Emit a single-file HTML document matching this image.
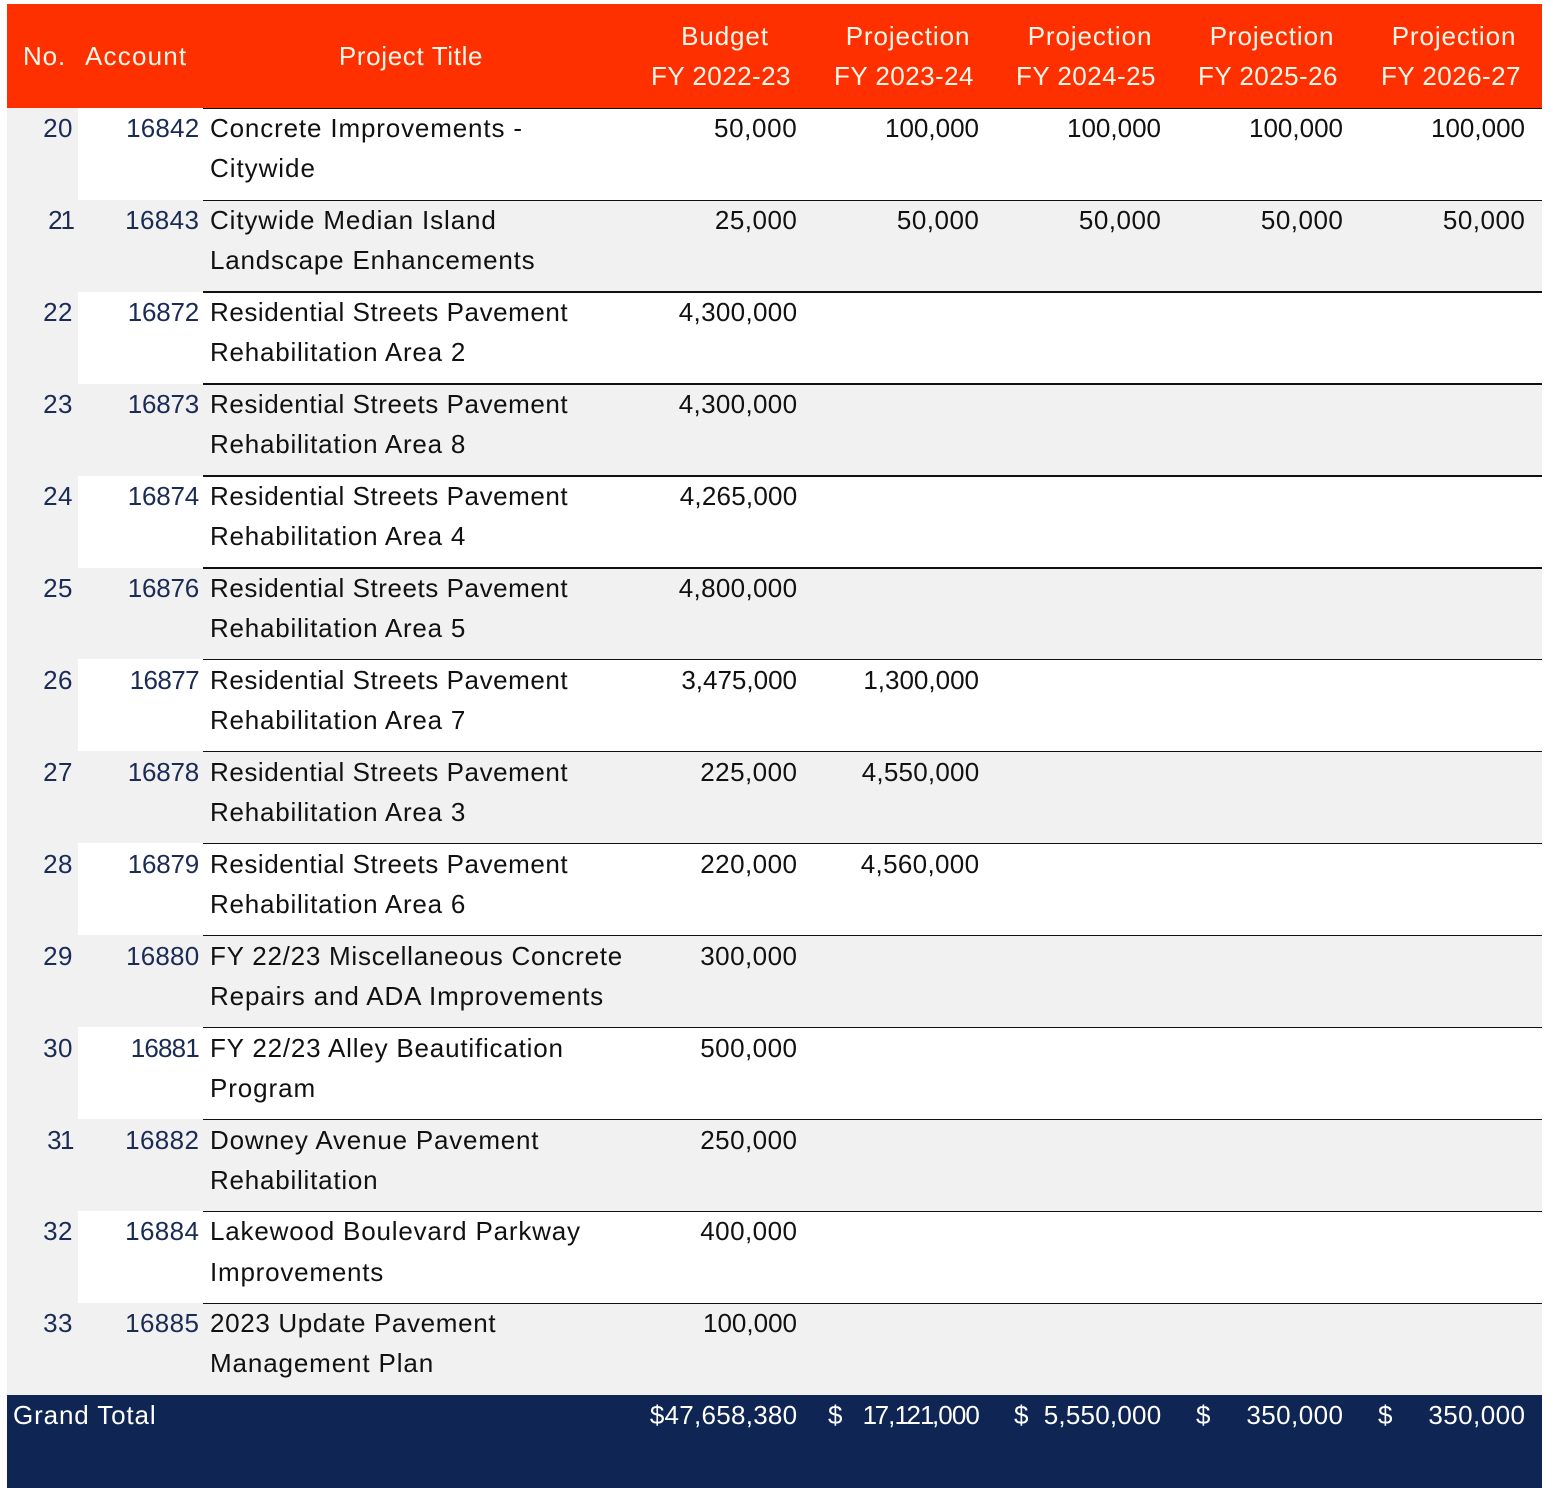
<!DOCTYPE html>
<html>
<head>
<meta charset="utf-8">
<style>
html,body{margin:0;padding:0;background:#fff}
body{position:relative;width:1553px;height:1488px;overflow:hidden;font-family:"Liberation Sans",Arial,sans-serif;font-size:26px;color:#111}
div{position:absolute}
.t,.n,.h,.c,.f{white-space:nowrap;line-height:40px;height:40px}
.t{left:210px;letter-spacing:.8px;color:#111}
.r{letter-spacing:.56px}
.n{text-align:right;letter-spacing:0;color:#111;width:200px}
.s{letter-spacing:.45px}
.s,.n[style*="letter-spacing:."]{margin-left:.4px}
.no{left:-127px;color:#1a2b55;letter-spacing:.5px}
.ac{left:-1px;color:#1a2b55}
.b{left:597px}.p1{left:779px}.p2{left:961px}.p3{left:1143px}.p4{left:1325px}
.h{color:#fff7ea;text-align:center;width:300px;letter-spacing:.9px}
.y{letter-spacing:.45px}
.f{color:#fff}
.g{left:78px;width:1464px;height:92px}
.l{left:203px;width:1339px;height:1px;background:#111}
.l2{height:2px}
.o{letter-spacing:-2.5px}
</style>
</head>
<body>
<div style="left:7px;top:4px;width:1535px;height:104px;background:#ff3000"></div>
<div style="left:7px;top:108px;width:1535px;height:1287px;background:#f1f1f1"></div>
<div class="g" style="top:108px;background:#fff"></div>
<div class="g" style="top:292px;background:#fff"></div>
<div class="g" style="top:476px;background:#fff"></div>
<div class="g" style="top:659px;background:#fff"></div>
<div class="g" style="top:843px;background:#fff"></div>
<div class="g" style="top:1027px;background:#fff"></div>
<div class="g" style="top:1211px;background:#fff"></div>
<div style="left:7px;top:1395px;width:1535px;height:93px;background:#0f2554"></div>

<div class="l" style="top:108px"></div>
<div class="l" style="top:200px"></div>
<div class="l l2" style="top:291px"></div>
<div class="l l2" style="top:383px"></div>
<div class="l l2" style="top:475px"></div>
<div class="l l2" style="top:567px"></div>
<div class="l" style="top:659px"></div>
<div class="l" style="top:751px"></div>
<div class="l" style="top:843px"></div>
<div class="l" style="top:935px"></div>
<div class="l" style="top:1027px"></div>
<div class="l" style="top:1119px"></div>
<div class="l" style="top:1211px"></div>
<div class="l" style="top:1303px"></div>

<div class="h" style="left:23px;top:36px;width:auto">No.</div>
<div class="h" style="left:85px;top:36px;width:auto;letter-spacing:1.2px">Account</div>
<div class="h" style="left:261px;top:36px;letter-spacing:.65px">Project Title</div>
<div class="h" style="left:575px;top:16px">Budget</div>
<div class="h y" style="left:571px;top:56px">FY 2022-23</div>
<div class="h" style="left:758px;top:16px">Projection</div>
<div class="h y" style="left:754px;top:56px">FY 2023-24</div>
<div class="h" style="left:940px;top:16px">Projection</div>
<div class="h y" style="left:936px;top:56px">FY 2024-25</div>
<div class="h" style="left:1122px;top:16px">Projection</div>
<div class="h y" style="left:1118px;top:56px">FY 2025-26</div>
<div class="h" style="left:1304px;top:16px">Projection</div>
<div class="h y" style="left:1301px;top:56px">FY 2026-27</div>

<div class="n no" style="top:108px">20</div><div class="n ac" style="top:108px;letter-spacing:.2px">16842</div>
<div class="t" style="top:108px;letter-spacing:.85px">Concrete Improvements -</div><div class="t" style="top:148px;letter-spacing:.95px">Citywide</div>
<div class="n b s" style="top:108px;letter-spacing:.65px">50,000</div><div class="n p1" style="top:108px">100,000</div><div class="n p2" style="top:108px">100,000</div><div class="n p3" style="top:108px">100,000</div><div class="n p4" style="top:108px">100,000</div>

<div class="n no" style="top:200px;letter-spacing:-2px">21</div><div class="n ac" style="top:200px;letter-spacing:.4px">16843</div>
<div class="t" style="top:200px;letter-spacing:.88px">Citywide Median Island</div><div class="t" style="top:240px">Landscape Enhancements</div>
<div class="n b s" style="top:200px;letter-spacing:.5px">25,000</div><div class="n p1 s" style="top:200px;letter-spacing:.5px">50,000</div><div class="n p2 s" style="top:200px;letter-spacing:.5px">50,000</div><div class="n p3 s" style="top:200px;letter-spacing:.5px">50,000</div><div class="n p4 s" style="top:200px;letter-spacing:.5px">50,000</div>

<div class="n no" style="top:292px">22</div><div class="n ac" style="top:292px;letter-spacing:-.2px">16872</div>
<div class="t r" style="top:292px">Residential Streets Pavement</div><div class="t" style="top:332px;letter-spacing:.77px">Rehabilitation Area 2</div>
<div class="n b" style="top:292px;letter-spacing:.33px">4,300,000</div>

<div class="n no" style="top:384px">23</div><div class="n ac" style="top:384px;letter-spacing:-.2px">16873</div>
<div class="t r" style="top:384px">Residential Streets Pavement</div><div class="t" style="top:424px;letter-spacing:.77px">Rehabilitation Area 8</div>
<div class="n b" style="top:384px;letter-spacing:.33px">4,300,000</div>

<div class="n no" style="top:476px">24</div><div class="n ac" style="top:476px;letter-spacing:-.2px">16874</div>
<div class="t r" style="top:476px">Residential Streets Pavement</div><div class="t" style="top:516px;letter-spacing:.77px">Rehabilitation Area 4</div>
<div class="n b" style="top:476px;letter-spacing:.22px">4,265,000</div>

<div class="n no" style="top:568px">25</div><div class="n ac" style="top:568px;letter-spacing:-.2px">16876</div>
<div class="t r" style="top:568px">Residential Streets Pavement</div><div class="t" style="top:608px;letter-spacing:.77px">Rehabilitation Area 5</div>
<div class="n b" style="top:568px;letter-spacing:.33px">4,800,000</div>

<div class="n no" style="top:660px">26</div><div class="n ac" style="top:660px;letter-spacing:-.6px">16877</div>
<div class="t r" style="top:660px">Residential Streets Pavement</div><div class="t" style="top:700px;letter-spacing:.77px">Rehabilitation Area 7</div>
<div class="n b" style="top:660px">3,475,000</div><div class="n p1" style="top:660px">1,300,000</div>

<div class="n no" style="top:752px">27</div><div class="n ac" style="top:752px;letter-spacing:-.2px">16878</div>
<div class="t r" style="top:752px">Residential Streets Pavement</div><div class="t" style="top:792px;letter-spacing:.77px">Rehabilitation Area 3</div>
<div class="n b s" style="top:752px">225,000</div><div class="n p1" style="top:752px;letter-spacing:.22px">4,550,000</div>

<div class="n no" style="top:844px">28</div><div class="n ac" style="top:844px;letter-spacing:-.2px">16879</div>
<div class="t r" style="top:844px">Residential Streets Pavement</div><div class="t" style="top:884px;letter-spacing:.77px">Rehabilitation Area 6</div>
<div class="n b s" style="top:844px">220,000</div><div class="n p1" style="top:844px;letter-spacing:.33px">4,560,000</div>

<div class="n no" style="top:936px">29</div><div class="n ac" style="top:936px;letter-spacing:.2px">16880</div>
<div class="t" style="top:936px;letter-spacing:.75px">FY 22/23 Miscellaneous Concrete</div><div class="t" style="top:976px;letter-spacing:.86px">Repairs and ADA Improvements</div>
<div class="n b s" style="top:936px">300,000</div>

<div class="n no" style="top:1028px">30</div><div class="n ac" style="top:1028px;letter-spacing:-.8px">16881</div>
<div class="t" style="top:1028px;letter-spacing:.8px">FY 22/23 Alley Beautification</div><div class="t" style="top:1068px;letter-spacing:.9px">Program</div>
<div class="n b s" style="top:1028px">500,000</div>

<div class="n no" style="top:1120px;letter-spacing:-1.5px">31</div><div class="n ac" style="top:1120px;letter-spacing:.4px">16882</div>
<div class="t" style="top:1120px">Downey Avenue Pavement</div><div class="t" style="top:1160px;letter-spacing:.77px">Rehabilitation</div>
<div class="n b s" style="top:1120px">250,000</div>

<div class="n no" style="top:1211px">32</div><div class="n ac" style="top:1211px;letter-spacing:.4px">16884</div>
<div class="t" style="top:1211px;letter-spacing:.81px">Lakewood Boulevard Parkway</div><div class="t" style="top:1252px;letter-spacing:.78px">Improvements</div>
<div class="n b s" style="top:1211px">400,000</div>

<div class="n no" style="top:1303px">33</div><div class="n ac" style="top:1303px;letter-spacing:.4px">16885</div>
<div class="t" style="top:1303px;letter-spacing:.65px">2023 Update Pavement</div><div class="t" style="top:1343px;letter-spacing:.87px">Management Plan</div>
<div class="n b" style="top:1303px">100,000</div>

<div class="f" style="left:13px;top:1395px;letter-spacing:.87px">Grand Total</div>
<div class="n f b" style="top:1395px;color:#fff;letter-spacing:.27px">$47,658,380</div>
<div class="f" style="left:828px;top:1395px">$</div><div class="n f p1" style="top:1395px;color:#fff;letter-spacing:-.9px"><span class="o">1</span>7,<span class="o">1</span>2<span class="o">1</span>,000</div>
<div class="f" style="left:1014px;top:1395px">$</div><div class="n f p2" style="top:1395px;color:#fff;letter-spacing:.22px">5,550,000</div>
<div class="f" style="left:1196px;top:1395px">$</div><div class="n f p3" style="top:1395px;color:#fff;letter-spacing:.43px">350,000</div>
<div class="f" style="left:1378px;top:1395px">$</div><div class="n f p4" style="top:1395px;color:#fff;letter-spacing:.43px">350,000</div>
</body>
</html>
